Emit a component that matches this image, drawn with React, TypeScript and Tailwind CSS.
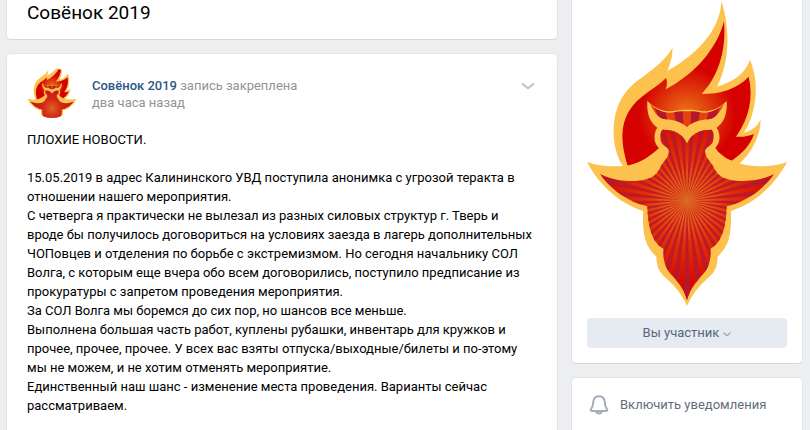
import React, { useId } from 'react';

const CENTER = { x: 351, y: 602 };

const FLAME_OUTER =
  'M454 3 C452 80 395 155 292 213 C302 187 309 165 307 143 C292 175 245 212 205 240 C152 280 130 330 131 405 C133 445 145 480 160 500 L200 560 L480 560 L510 490 C545 455 572 410 572 358 C562 380 545 392 522 398 C555 345 573 260 540 179 C525 222 490 244 441 260 C480 185 481 85 454 3 Z';
const FLAME_INNER =
  'M462 64 C440 150 370 225 287 268 C292 255 292 245 288 234 C262 262 220 280 190 315 C150 365 150 420 173 497 C210 490 245 465 268 443 L436 443 C448 462 462 475 485 482 C515 462 540 437 552 402 C535 408 520 412 498 410 C540 350 550 290 536 230 C500 268 450 282 395 282 C440 235 470 160 462 64 Z';
const BODY_OUTER =
  'M51 486 C90 501 130 500 170 497 C210 490 240 470 269 446 C249 430 250 400 262 383 C238 365 230 340 232 303 C258 330 290 337 310 333 C335 328 367 328 392 333 C412 337 444 330 470 303 C472 340 464 365 440 383 C452 400 453 430 433 446 C462 470 472 478 492 485 C540 502 600 505 651 486 C612 560 552 610 483 633 C484 700 480 735 443 770 C442 812 427 822 402 845 C377 870 360 895 351 918 C342 895 325 870 300 845 C275 822 260 812 259 770 C222 735 218 700 219 633 C150 610 90 560 51 486 Z';
const BODY_INNER =
  'M90 522 C130 543 170 543 200 543 C240 540 258 528 268 508 C277 485 297 475 297 453 C297 440 275 440 272 420 C270 405 272 395 278 389 C315 388 338 403 351 430 C364 403 387 388 424 389 C430 395 432 405 430 420 C427 440 405 440 405 453 C405 475 425 485 434 508 C444 528 462 540 502 543 C532 543 572 543 612 522 C582 565 532 605 470 619 C468 680 457 727 421 747 C424 790 412 810 392 830 C372 853 357 875 351 900 C345 875 330 853 310 830 C290 810 278 790 281 747 C245 727 234 680 232 619 C170 605 120 565 90 522 Z';
const CROWN_INNER =
  'M240 312 C268 337 290 340 312 337 C335 333 367 333 390 337 C412 340 434 337 462 312 C452 332 440 355 415 358 C385 360 365 368 351 382 C337 368 317 360 287 358 C262 355 250 332 240 312 Z';

const sunburst = (count: number) =>
  Array.from({ length: count }, (_, i) => {
    const angle = Math.PI / 2 + (i * 2 * Math.PI) / count;
    const half = Math.PI / count / 2;
    const point = (a: number) =>
      `${(CENTER.x + 420 * Math.cos(a)).toFixed(1)} ${(CENTER.y + 420 * Math.sin(a)).toFixed(1)}`;
    return `M${CENTER.x} ${CENTER.y} L${point(angle - half)} L${point(angle + half)} Z`;
  }).join(' ');

const BODY_RAYS = sunburst(45);
const CROWN_RAYS = sunburst(33);

interface OwlLogoProps {
  viewBox: string;
  className?: string;
}

const OwlLogo: React.FC<OwlLogoProps> = ({ viewBox, className }) => {
  const id = useId();

  return (
    <svg viewBox={viewBox} className={className} role="img" aria-label="Совёнок 2019">
      <defs>
        <radialGradient id={`${id}flame`} gradientUnits="userSpaceOnUse" cx="351" cy="345" r="145">
          <stop offset="0" stopColor="#ec7a18" />
          <stop offset="0.4" stopColor="#e2480f" />
          <stop offset="1" stopColor="#d50000" />
        </radialGradient>
        <radialGradient id={`${id}body`} gradientUnits="userSpaceOnUse" cx="351" cy="602" r="250">
          <stop offset="0" stopColor="#e07a24" />
          <stop offset="0.2" stopColor="#ec6418" />
          <stop offset="0.5" stopColor="#e23206" />
          <stop offset="1" stopColor="#d90800" />
        </radialGradient>
        <radialGradient id={`${id}rays`} gradientUnits="userSpaceOnUse" cx="351" cy="602" r="250">
          <stop offset="0" stopColor="#d2601f" />
          <stop offset="0.15" stopColor="#c8301f" />
          <stop offset="0.4" stopColor="#c01c24" />
          <stop offset="1" stopColor="#b5182c" />
        </radialGradient>
        <clipPath id={`${id}bodyClip`}>
          <path d={BODY_INNER} />
        </clipPath>
        <clipPath id={`${id}crownClip`}>
          <path d={CROWN_INNER} />
        </clipPath>
      </defs>
      <path d={FLAME_OUTER} fill="#fdc14d" />
      <path d={FLAME_INNER} fill={`url(#${id}flame)`} />
      <path d={BODY_OUTER} fill="#fdc14d" />
      <path d={BODY_INNER} fill={`url(#${id}body)`} />
      <path d={BODY_RAYS} fill={`url(#${id}rays)`} clipPath={`url(#${id}bodyClip)`} />
      <path d={CROWN_INNER} fill="#e5420f" />
      <path d={CROWN_RAYS} fill="#b5182c" clipPath={`url(#${id}crownClip)`} />
    </svg>
  );
};

const card = 'bg-white shadow-[0_1px_0_0_#d7d8db,0_0_0_1px_#e3e4e8]';

const paragraphs = [
  'ПЛОХИЕ НОВОСТИ.',
  '',
  '15.05.2019 в адрес Калининского УВД поступила анонимка с угрозой теракта в отношении нашего мероприятия.',
  'С четверга я практически не вылезал из разных силовых структур г. Тверь и вроде бы получилось договориться на условиях заезда в лагерь дополнительных ЧОПовцев и отделения по борьбе с экстремизмом. Но сегодня начальнику СОЛ Волга, с которым еще вчера обо всем договорились, поступило предписание из прокуратуры с запретом проведения мероприятия.',
  'За СОЛ Волга мы боремся до сих пор, но шансов все меньше.',
  'Выполнена большая часть работ, куплены рубашки, инвентарь для кружков и прочее, прочее, прочее. У всех вас взяты отпуска/выходные/билеты и по-этому мы не можем, и не хотим отменять мероприятие.',
  'Единственный наш шанс - изменение места проведения. Варианты сейчас рассматриваем.',
];

const Post: React.FC = () => (
  <article className={`${card} rounded-sm px-5 pt-[14px] pb-5`}>
    <header className="flex items-center">
      <a href="#" className="size-[50px] shrink-0 overflow-hidden rounded-full">
        <OwlLogo viewBox="51 120 600 600" className="block size-full" />
      </a>
      <div className="ml-[15px] flex-1 pt-0.5 leading-[17px] text-[#939393]">
        <p>
          <a href="#" className="font-medium text-[#2a5885]">Совёнок 2019</a> запись закреплена
        </p>
        <time className="block">два часа назад</time>
      </div>
      <button type="button" aria-label="Действия" className="mr-0.5 mb-[14px] cursor-pointer">
        <svg viewBox="0 0 14 8" className="block h-2 w-[14px]" fill="none">
          <path d="M1 1.5 L7 6.3 L13 1.5" stroke="#bcc3ce" strokeWidth="2" />
        </svg>
      </button>
    </header>
    <div className="mt-3 leading-[19px]">
      {paragraphs.map((text, i) => (
        <p key={i} className="min-h-[19px]">{text}</p>
      ))}
    </div>
  </article>
);

const Sidebar: React.FC = () => (
  <aside className="flex w-[230px] shrink-0 flex-col gap-[15px] text-[#55677d]">
    <section className={`${card} rounded-b-sm px-[15px] pb-[15px]`}>
      <OwlLogo viewBox="51 0 600 921" className="block w-full" />
      <button
        type="button"
        className="mt-[11px] flex h-[30px] w-full cursor-pointer items-center justify-center gap-1 rounded-sm bg-[#e5ebf1]"
      >
        Вы участник
        <svg viewBox="0 0 8 5" className="mt-0.5 h-[5px] w-2" fill="none">
          <path d="M0.5 0.8 L4 3.7 L7.5 0.8" stroke="#99a9bb" strokeWidth="1.4" />
        </svg>
      </button>
    </section>
    <section className={`${card} rounded-sm px-[15px] pt-[14px] pb-6`}>
      <button type="button" className="flex cursor-pointer items-center text-[#626d7a]">
        <svg viewBox="0 0 24 26" className="mr-[9px] h-[26px] w-6" fill="none" stroke="#a5abb7" strokeWidth="2" strokeLinejoin="round">
          <path d="M12 4.3 C8.2 4.3 6.4 7 6.2 10.5 C6 14.5 5.5 15.3 4.3 16.7 C3.2 18 3.6 18.9 4.8 18.9 H19.2 C20.4 18.9 20.8 18 19.7 16.7 C18.5 15.3 18 14.5 17.8 10.5 C17.6 7 15.8 4.3 12 4.3 Z" />
          <path d="M9.3 19.5 C9.8 22 14.2 22 14.7 19.5" />
        </svg>
        Включить уведомления
      </button>
    </section>
  </aside>
);

export default function App() {
  return (
    <div className="flex h-screen items-start gap-[15px] overflow-hidden bg-[#edeef0] pr-2 pl-[7px] font-['Roboto','Noto_Sans',sans-serif] text-[13px] text-black">
      <main className="flex min-w-0 flex-1 flex-col gap-[15px]">
        <section className={`${card} rounded-b-sm px-5 pb-[13px]`}>
          <h1 className="text-[19px] leading-[26px]">Совёнок 2019</h1>
        </section>
        <Post />
      </main>
      <Sidebar />
    </div>
  );
}
